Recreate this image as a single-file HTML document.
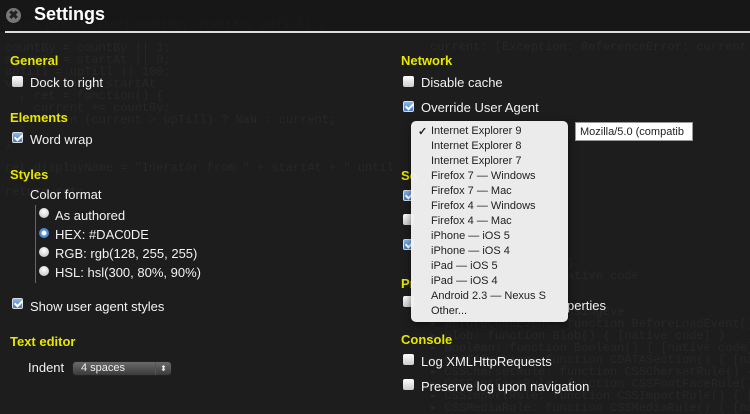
<!DOCTYPE html>
<html><head><meta charset="utf-8"><style>
*{margin:0;padding:0;box-sizing:border-box}
html,body{width:750px;height:414px;overflow:hidden}
body{background:#1d1d1d;position:relative;font-family:"Liberation Sans",sans-serif;color:#fff}
.a{position:absolute;white-space:nowrap}
.code{font-family:"Liberation Mono",monospace;font-size:12px;color:#272727;overflow:hidden}
.h{color:#e6e600;font-size:13px;font-weight:bold}
.t{font-size:13px;color:#f2f2f2}
.cb{position:absolute;width:11px;height:11px;border-radius:2px;background:linear-gradient(#fff,#ccc)}
.cb.on{background:linear-gradient(#8ab8ec,#3d7cc9);border:1px solid #ddd}
.cb.on:after{content:"";position:absolute;left:3px;top:0px;width:3px;height:6px;border:solid #fff;border-width:0 2px 2px 0;transform:rotate(45deg)}
.rd{position:absolute;width:10px;height:10px;border-radius:50%;background:radial-gradient(circle at 50% 35%,#fff,#bbb)}
.rd.on{background:radial-gradient(circle,#fff 0 2px,#4a8ad6 3px)}
.mi{position:absolute;left:20px;font-size:11px;color:#222}
</style></head><body>
<div class="a code" style="left:2px;top:18px;width:380px">ction getIterator(countBy, startAt, upTill) {</div>
<div class="a code" style="left:5px;top:42px;line-height:12px;width:390px">countBy = countBy || 1;<br>startAt = startAt || 0;<br>upTill = upTill || 100;<br>var current = startAt<br>&nbsp;&nbsp;, ret = function() {<br>&nbsp;&nbsp;&nbsp;&nbsp;current += countBy;<br>&nbsp;&nbsp;&nbsp;&nbsp;return (current &gt; upTill) ? NaN : current;<br>&nbsp;&nbsp;}<br>;<br><br>ret.displayName = "Inerator from " + startAt + " until " + upTill;<br><br>return ret;</div>
<div class="a code" style="left:430px;top:40px;width:320px">current: [Exception: ReferenceError: current is n</div>
<div class="a code" style="left:430px;top:258px;line-height:12px;width:320px">() { [native code] }<br>&nbsp;ArrayBuffer() { [native code<br>{ [native code] }<br>on]<br>function AudioProcessingEve<br>▸ BeforeLoadEvent: function BeforeLoadEvent() { [na<br>▸ Blob: function Blob() { [native code] }<br>▸ Boolean: function Boolean() { [native code] }<br>▸ CDATASection: function CDATASection() { [native c<br>▸ CSSCharsetRule: function CSSCharsetRule() { [nati<br>▸ CSSFontFaceRule: function CSSFontFaceRule() { [na<br>▸ CSSImportRule: function CSSImportRule() { [native<br>▸ CSSMediaRule: function CSSMediaRule() { [native c</div>
<div class="a" style="left:0;top:0;width:750px;height:32px;background:rgba(20,20,20,.6)"></div>
<div class="a" style="left:5px;top:31px;width:745px;height:2px;background:#ddd"></div>
<div class="a" style="left:6px;top:8px;width:15px;height:15px;border-radius:50%;background:#777;color:#222;font-size:12px;font-weight:bold;text-align:center;line-height:15px">✖</div>
<div class="a" style="left:34px;top:4px;font-size:18px;font-weight:bold;color:#fff">Settings</div>

<div class="a h" style="left:10px;top:53px">General</div>
<div class="cb" style="left:12px;top:76px"></div><div class="a t" style="left:30px;top:75px">Dock to right</div>
<div class="a h" style="left:10px;top:110px">Elements</div>
<div class="cb on" style="left:12px;top:132px"></div><div class="a t" style="left:30px;top:132px">Word wrap</div>
<div class="a h" style="left:10px;top:167px">Styles</div>
<div class="a t" style="left:30px;top:187px">Color format</div>
<div class="a" style="left:35px;top:205px;width:1px;height:78px;background:#666"></div>
<div class="rd" style="left:39px;top:208px"></div><div class="a t" style="left:55px;top:208px">As authored</div>
<div class="rd on" style="left:39px;top:228px"></div><div class="a t" style="left:55px;top:227px">HEX: #DAC0DE</div>
<div class="rd" style="left:39px;top:247px"></div><div class="a t" style="left:55px;top:246px">RGB: rgb(128, 255, 255)</div>
<div class="rd" style="left:39px;top:266px"></div><div class="a t" style="left:55px;top:265px">HSL: hsl(300, 80%, 90%)</div>
<div class="cb on" style="left:12px;top:298px"></div><div class="a t" style="left:30px;top:299px">Show user agent styles</div>
<div class="a h" style="left:10px;top:334px">Text editor</div>
<div class="a t" style="left:28px;top:360px">Indent</div>
<div class="a" style="left:72px;top:361px;width:100px;height:15px;border-radius:4px;background:linear-gradient(#6a6a6a,#3a3a3a);border:1px solid #222;font-size:11px;color:#eee;padding-left:8px;line-height:13px">4 spaces<span style="position:absolute;right:0;top:0;width:16px;height:13px;border-left:1px solid #555;text-align:center;font-size:8px">⬍</span></div>

<div class="a h" style="left:401px;top:53px">Network</div>
<div class="cb" style="left:403px;top:76px"></div><div class="a t" style="left:421px;top:75px">Disable cache</div>
<div class="cb on" style="left:403px;top:101px"></div><div class="a t" style="left:421px;top:100px">Override User Agent</div>
<div class="a h" style="left:401px;top:168px">So</div>
<div class="cb on" style="left:403px;top:190px"></div>
<div class="cb" style="left:403px;top:214px"></div>
<div class="cb on" style="left:403px;top:239px"></div>
<div class="a h" style="left:401px;top:276px">Pr</div>
<div class="cb" style="left:403px;top:296px"></div>
<div class="a t" style="left:567px;top:298px">perties</div>
<div class="a h" style="left:401px;top:332px">Console</div>
<div class="cb" style="left:403px;top:354px"></div><div class="a t" style="left:421px;top:354px">Log XMLHttpRequests</div>
<div class="cb" style="left:403px;top:379px"></div><div class="a t" style="left:421px;top:379px">Preserve log upon navigation</div>

<div class="a" style="left:575px;top:122px;width:118px;height:19px;background:#fff;border:1px solid #999;font-size:11px;color:#222;padding:3px 0 0 4px;overflow:hidden">Mozilla/5.0 (compatib</div>
<div class="a" style="left:411px;top:121px;width:157px;height:201px;background:rgba(242,242,242,.97);border-radius:5px;box-shadow:0 2px 8px rgba(0,0,0,.5)">
<div class="mi" style="left:7px;top:4px;font-weight:bold">✓</div>
<div class="mi" style="top:4px">Internet Explorer 9</div>
<div class="mi" style="top:19px">Internet Explorer 8</div>
<div class="mi" style="top:34px">Internet Explorer 7</div>
<div class="mi" style="top:49px">Firefox 7 — Windows</div>
<div class="mi" style="top:64px">Firefox 7 — Mac</div>
<div class="mi" style="top:79px">Firefox 4 — Windows</div>
<div class="mi" style="top:94px">Firefox 4 — Mac</div>
<div class="mi" style="top:109px">iPhone — iOS 5</div>
<div class="mi" style="top:124px">iPhone — iOS 4</div>
<div class="mi" style="top:139px">iPad — iOS 5</div>
<div class="mi" style="top:154px">iPad — iOS 4</div>
<div class="mi" style="top:169px">Android 2.3 — Nexus S</div>
<div class="mi" style="top:184px">Other...</div>
</div>
</body></html>
